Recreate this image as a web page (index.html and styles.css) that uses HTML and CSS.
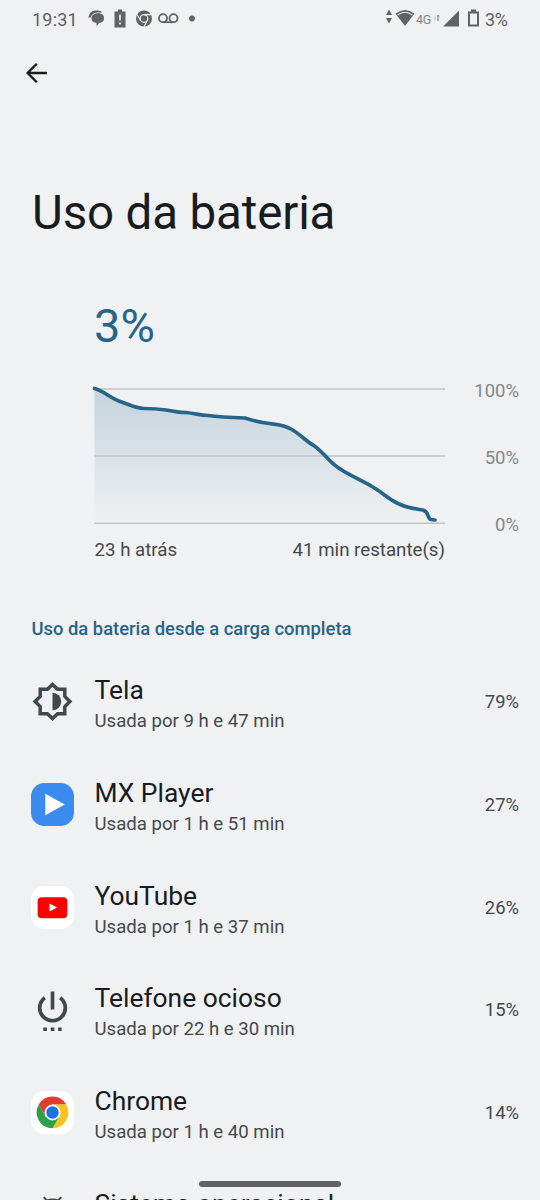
FILE: index.html
```html
<!DOCTYPE html>
<html lang="pt-BR">
<head>
<meta charset="utf-8">
<title>Uso da bateria</title>
<link rel="stylesheet" href="styles.css">
</head>
<body>
<div class="screen">
  <header class="status">
    <span class="clock">19:31</span>
    <svg class="notifications" width="110" height="20" viewBox="0 0 110 20">
      <path d="M.3 8.500Q2 1.500 7 1.500H10Q13 1.500 14 3.500H9Q4 4 2.800 8.500Z"/>
      <path d="M9 4.300H11Q16 4.800 16 9Q16 13.500 11.500 13.800L8.500 17V13.800Q3.500 13.500 3.500 9Q4 4.800 9 4.300Z"/>
      <path d="M30 .5h4v2h3.500v16H26.500V2.500H30z"/><path class="cut" d="M31.200 5.500h1.600v6h-1.600zM31.200 13.500h1.600v2h-1.600z"/>
      <circle cx="56" cy="9.500" r="8"/>
      <circle class="cut-line" cx="56" cy="9.500" r="3.800"/>
      <path class="cut-line" d="M56 5.700H63M52.700 11.500L49 5.500M59.300 11.500L56 17.500"/>
      <g class="tape"><circle cx="75" cy="9.200" r="4"/><circle cx="85.500" cy="9.200" r="4"/><path d="M75 13.200H85.500"/></g>
      <circle cx="104" cy="9.500" r="2.900"/>
    </svg>
    <svg class="wifi" width="28" height="20" viewBox="0 0 28 20">
      <path d="M-1 6L2 .5L5 6zM-1 9L2 14.500L5 9z"/>
      <path d="M8.500 4.500Q18 -2.500 27.500 4.500L18 17z"/>
      <path class="cut-line" d="M10.500 6Q18 0.500 25.500 6"/>
    </svg>
    <span class="network">4G</span>
    <svg class="signal" width="49" height="20" viewBox="0 0 49 20">
      <path class="faint" d="M0 6.500v5"/><path class="data" d="M3 6v6M2 7h2.500"/>
      <path d="M24 1.500V17.500H8z"/>
      <path class="battery" d="M34 3.500h9v13h-9z"/><path d="M36 .5h5V4h-5z"/>
    </svg>
    <span class="level">3%</span>
  </header>

  <nav class="toolbar">
    <svg width="22" height="22" viewBox="0 0 22 22"><path d="M21 11H2M10.800 1.800L1.600 11L10.800 20.200"/></svg>
  </nav>
  <h1>Uso da bateria</h1>

  <section class="usage">
    <div class="current">3%</div>
    <div class="plot">
      <svg class="chart" width="353" height="142" viewBox="0 0 353 142">
        <defs><linearGradient id="fade" x1="0" y1="0" x2="0" y2="1">
          <stop offset="0" stop-color="#266489" stop-opacity=".21"/>
          <stop offset="1" stop-color="#266489" stop-opacity="0"/>
        </linearGradient></defs>
        <path class="area" d="M1.500 3.500C10 5.500 17 13 27 16.500C37 20 44 23.500 51 23.500C60 23.500 66 24 73 25C83 27 88 27.500 93 27.500C103 28.500 107 30.500 115 30.500C125 32 133 32.500 152 33C160 35.500 165 37 173 38C185 40 190 39.500 198 44C207 49 214 57 220 60C232 68 237 79 248 84.500C258 91 268 95 279 101.500C289 107 295 114 305 118.500C315 123.500 322 124 330 126C337 127 334 133 339 134.500L343 139H1.500Z"/>
        <path class="grid" d="M1.500 4H352M1.500 71H352M1.500 138.300H352"/>
        <path class="curve" d="M1.500 3.500C10 5.500 17 13 27 16.500C37 20 44 23.500 51 23.500C60 23.500 66 24 73 25C83 27 88 27.500 93 27.500C103 28.500 107 30.500 115 30.500C125 32 133 32.500 152 33C160 35.500 165 37 173 38C185 40 190 39.500 198 44C207 49 214 57 220 60C232 68 237 79 248 84.500C258 91 268 95 279 101.500C289 107 295 114 305 118.500C315 123.500 322 124 330 125C337 127 333 133 338 134.500L342 135"/>
      </svg>
      <div class="scale"><span>100%</span><span>50%</span><span>0%</span></div>
    </div>
    <div class="times"><span>23 h atrás</span><span>41 min restante(s)</span></div>
  </section>

  <h2>Uso da bateria desde a carga completa</h2>

  <main class="apps">
    <div class="row">
      <svg class="icon" viewBox="0 0 42 42">
        <path class="sun" d="M21 4.300L26 9H33V16L38 21L33 26V33H26L21 37.700L16 33H9V26L4 21L9 16V9H16Z"/>
        <path class="dark" d="M21 12.500A8.500 8.500 0 0 1 21 29.500Z"/>
      </svg>
      <div class="label"><div class="name">Tela</div><div class="time">Usada por 9 h e 47 min</div></div><span class="share">79%</span>
    </div>
    <div class="row">
      <svg class="icon" viewBox="0 0 42 42"><rect width="42" height="42" rx="13" fill="#3c8bee"/><path fill="#fff" d="M14 10.500L33 21L14 31.500Z"/></svg>
      <div class="label"><div class="name">MX Player</div><div class="time">Usada por 1 h e 51 min</div></div><span class="share">27%</span>
    </div>
    <div class="row">
      <svg class="icon" viewBox="0 0 42 42"><rect width="42" height="42" rx="13" fill="#fff"/><rect x="6.500" y="11" width="29" height="20.500" rx="4" fill="#f00"/><path fill="#fff" d="M18 17L25.500 21L18 25Z"/></svg>
      <div class="label"><div class="name">YouTube</div><div class="time">Usada por 1 h e 37 min</div></div><span class="share">26%</span>
    </div>
    <div class="row">
      <svg class="icon" viewBox="0 0 42 42">
        <path class="power" d="M21 3.500V21M13.500 9.500A12.500 12.500 0 1 0 28.500 9.500"/>
        <path class="dark" d="M12 38.500h3.500v3.500h-3.500zM19.300 38.500h3.500v3.500h-3.500zM26.500 38.500h3.500v3.500h-3.500z"/>
      </svg>
      <div class="label"><div class="name">Telefone ocioso</div><div class="time">Usada por 22 h e 30 min</div></div><span class="share">15%</span>
    </div>
    <div class="row">
      <svg class="icon" viewBox="0 0 42 42"><rect width="42" height="42" rx="13" fill="#fff"/>
        <path fill="#e33b2e" d="M7.600 13.300A15.400 15.400 0 0 1 34.400 13.300H21L14.300 24.900Z"/>
        <path fill="#fcc31e" d="M34.400 13.300A15.400 15.400 0 0 1 21 36.400L27.700 24.900L21 13.300Z"/>
        <path fill="#2da04c" d="M21 36.400A15.400 15.400 0 0 1 7.600 13.300L14.300 24.900L27.700 24.900Z"/>
        <circle cx="21" cy="21" r="7.700" fill="#fff"/><circle cx="21" cy="21" r="6.100" fill="#1b73e8"/>
      </svg>
      <div class="label"><div class="name">Chrome</div><div class="time">Usada por 1 h e 40 min</div></div><span class="share">14%</span>
    </div>
    <div class="row">
      <svg class="icon" viewBox="0 0 42 42"><path class="android" d="M12.500 3L16 7M29.500 3L26 7M11 15Q12 5.500 21 5.500T31 15Z"/></svg>
      <div class="label"><div class="name">Sistema operacional</div></div>
    </div>
  </main>
  <div class="home"></div>
</div>
</body>
</html>
```
FILE: styles.css
```css
* { box-sizing: border-box; }
body { margin: 0; background: #eff1f3; font-family: Roboto, sans-serif; color: #191c1e; }
svg { display: block; flex: none; overflow: visible; }
.screen { position: relative; width: 540px; height: 1200px; overflow: hidden; }
.status { height: 38px; padding: 0 31px 0 32px; display: flex; align-items: center; color: #606264; font-size: 18px; }
.status svg { fill: #606264; }
.clock { width: 46px; margin-right: 10px; letter-spacing: .2px; }
.status .cut { fill: #eff1f3; }
.status .cut-line { fill: none; stroke: #eff1f3; stroke-width: 1.2; }
.tape { fill: none; stroke: #606264; stroke-width: 1.8; }
.wifi { margin-left: auto; }
.network { font-size: 12.5px; margin-left: 1px; width: 19px; color: #838587; letter-spacing: -.4px; }
.status .faint { fill: none; stroke: #c6c8ca; stroke-width: 1.2; }
.status .data { fill: none; stroke: #85878a; stroke-width: 1.2; }
.status .battery { fill: none; stroke: #606264; stroke-width: 2; }
.level { width: 24px; margin-left: 1px; letter-spacing: -.3px; }
.toolbar { height: 70px; padding: 24px 26px; }
.toolbar svg { fill: none; stroke: #191c1e; stroke-width: 2.3; }
h1 { margin: 77px 0 0 32px; font-size: 47.5px; line-height: 56px; font-weight: 400; letter-spacing: -.15px; white-space: nowrap; }
.usage { padding: 59px 21px 0 93px; }
.current { margin-left: 1px; height: 52px; line-height: 52px; font-size: 47px; color: #266489; }
.plot { display: flex; justify-content: space-between; margin-top: 33px; height: 142px; }
.grid { fill: none; stroke: #c1c4c6; stroke-width: 1.4; }
.area { fill: url(#fade); }
.curve { fill: none; stroke: #266489; stroke-width: 3.7; stroke-linecap: round; stroke-linejoin: round; }
.scale { height: 156px; margin-top: -5px; display: flex; flex-direction: column; justify-content: space-between; text-align: right; font-size: 18.5px; line-height: 22px; color: #85888a; }
.times { margin-top: 12px; padding: 0 74px 0 1.5px; display: flex; justify-content: space-between; font-size: 18.7px; line-height: 22px; color: #45494c; }
h2 { margin: 57px 0 0 31.5px; font-size: 18.4px; line-height: 22px; font-weight: 500; color: #266489; white-space: nowrap; }
.apps { padding: 10.4px 21px 0 31px; }
.row { height: 102.7px; display: flex; align-items: center; }
.icon { width: 43px; height: 43px; }
.sun { fill: none; stroke: #41484d; stroke-width: 3.4; }
.dark { fill: #41484d; }
.power { fill: none; stroke: #41484d; stroke-width: 3.6; }
.android { fill: none; stroke: #41484d; stroke-width: 2; }
.label { height: 58px; padding-top: 1.7px; margin-left: 20.5px; white-space: nowrap; }
.name { font-size: 26.4px; line-height: 32px; }
.time { font-size: 18.6px; line-height: 24px; margin-top: 2.8px; color: #45494c; }
.share { margin-left: auto; font-size: 18.4px; color: #45494c; }
.home { position: absolute; left: 199px; top: 1181px; width: 142px; height: 6px; border-radius: 3px; background: #626364; }
```
